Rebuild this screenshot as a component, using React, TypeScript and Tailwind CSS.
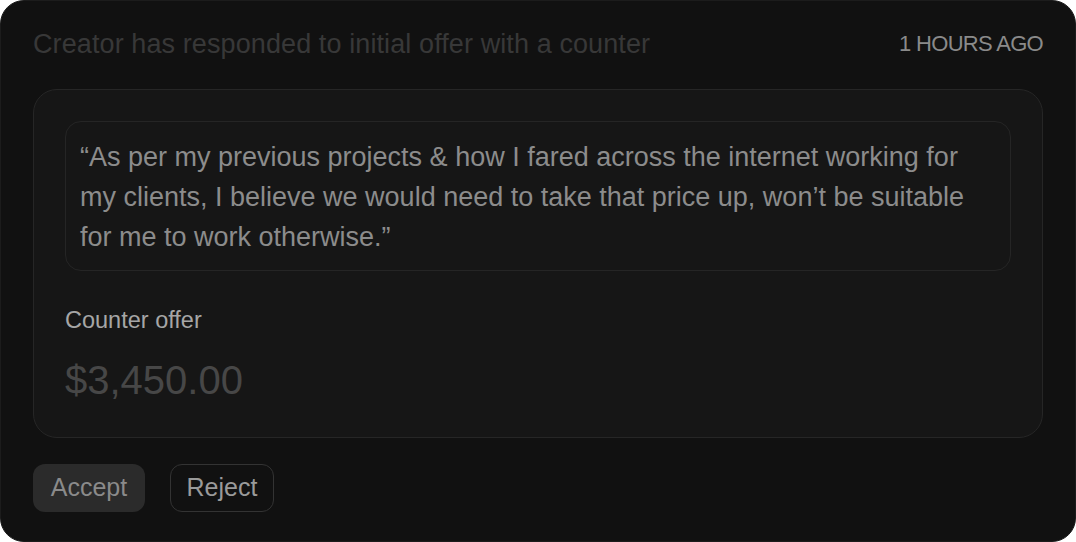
import React from "react";

export default function App() {
  return (
    <div
      className="w-[1076px] h-[542px] bg-white"
      style={{ fontFamily: '"Liberation Sans", Arial, sans-serif' }}
    >
      <div className="h-full rounded-[24px] bg-[#111111] border border-[#1c1c1c] px-[32px] pt-[27px]">
        <div className="flex items-center justify-between">
          <p className="text-[27px] leading-[32px] text-[#383838] tracking-[0.1px]">
            Creator has responded to initial offer with a counter
          </p>
          <span className="text-[22px] leading-[32px] text-[#8a8a8a] uppercase tracking-[-0.7px]">
            1 hours ago
          </span>
        </div>

        <div className="mt-[29px] rounded-[24px] border border-[#262626] bg-[#161616] px-[31px] pt-[31px] pb-[37px]">
          <div className="rounded-[16px] border border-[#252525] px-[14px] pt-[15px] pb-[13px]">
            <p className="text-[27px] leading-[40px] text-[#8c8c8c]">
              “As per my previous projects &amp; how I fared across the internet working for
              <br />
              my clients, I believe we would need to take that price up, won’t be suitable
              <br />
              for me to work otherwise.”
            </p>
          </div>

          <p className="mt-[35px] text-[23.5px] leading-[28px] text-[#a6a6a6]">
            Counter offer
          </p>
          <p className="mt-[26px] text-[40px] leading-[40px] text-[#474747]">
            $3,450.00
          </p>
        </div>

        <div className="mt-[26px] flex items-center gap-[25px]">
          <button
            type="button"
            className="h-[48px] w-[112px] rounded-[12px] bg-[#2b2b2b] text-[25px] text-[#8a8a8a]"
          >
            Accept
          </button>
          <button
            type="button"
            className="h-[48px] w-[104px] rounded-[12px] border border-[#333333] text-[25px] text-[#9a9a9a]"
          >
            Reject
          </button>
        </div>
      </div>
    </div>
  );
}
